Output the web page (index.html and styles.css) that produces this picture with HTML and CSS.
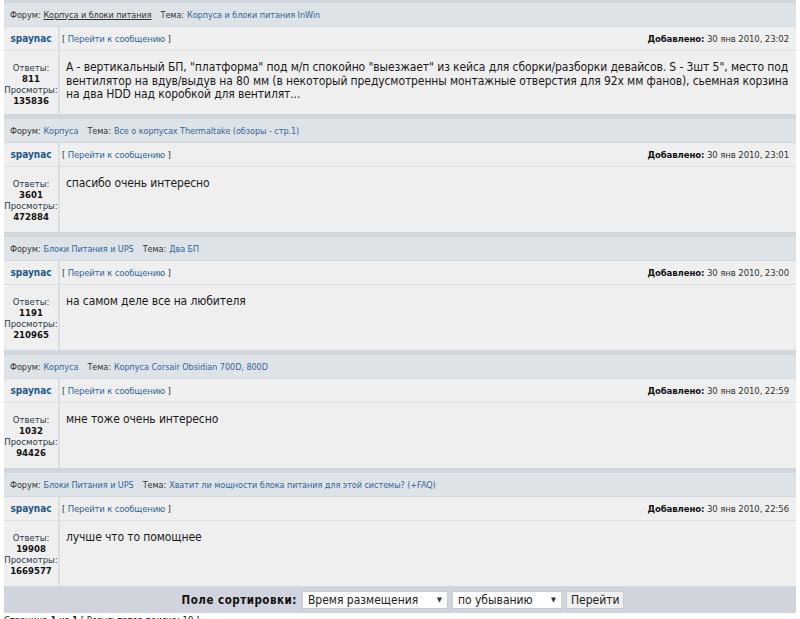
FILE: index.html
```
<!DOCTYPE html>
<html lang="ru">
<head>
<meta charset="utf-8">
<title>Результаты поиска</title>
<link rel="stylesheet" href="styles.css">
</head>
<body>
<div class="results">
  <div class="band band-top"></div>

  <div class="post post-first">
    <div class="post-head">Форум: <a class="visited" href="#">Корпуса и блоки питания</a><span class="sep"></span>Тема: <a href="#">Корпуса и блоки питания InWin</a></div>
    <div class="post-grid">
      <div class="author">spaynac</div>
      <div class="meta"><span class="goto">[ <a href="#">Перейти к сообщению</a> ]</span><span class="date"><b>Добавлено:</b> 30 янв 2010, 23:02</span></div>
      <div class="stats">Ответы:<br><b>811</b><br>Просмотры:<br><b>135836</b></div>
      <div class="body">А - вертикальный БП, "платформа" под м/п спокойно "выезжает" из кейса для сборки/разборки девайсов. S - 3шт 5", место под вентилятор на вдув/выдув на 80 мм (в некоторый предусмотренны монтажные отверстия для 92х мм фанов), сьемная корзина на два HDD над коробкой для вентилят...</div>
    </div>
  </div>
  <div class="band"></div>

  <div class="post">
    <div class="post-head">Форум: <a href="#">Корпуса</a><span class="sep"></span>Тема: <a href="#">Все о корпусах Thermaltake (обзоры - стр.1)</a></div>
    <div class="post-grid">
      <div class="author">spaynac</div>
      <div class="meta"><span class="goto">[ <a href="#">Перейти к сообщению</a> ]</span><span class="date"><b>Добавлено:</b> 30 янв 2010, 23:01</span></div>
      <div class="stats">Ответы:<br><b>3601</b><br>Просмотры:<br><b>472884</b></div>
      <div class="body">спасибо очень интересно</div>
    </div>
  </div>
  <div class="band"></div>

  <div class="post">
    <div class="post-head">Форум: <a href="#">Блоки Питания и UPS</a><span class="sep"></span>Тема: <a href="#">Два БП</a></div>
    <div class="post-grid">
      <div class="author">spaynac</div>
      <div class="meta"><span class="goto">[ <a href="#">Перейти к сообщению</a> ]</span><span class="date"><b>Добавлено:</b> 30 янв 2010, 23:00</span></div>
      <div class="stats">Ответы:<br><b>1191</b><br>Просмотры:<br><b>210965</b></div>
      <div class="body">на самом деле все на любителя</div>
    </div>
  </div>
  <div class="band"></div>

  <div class="post">
    <div class="post-head">Форум: <a href="#">Корпуса</a><span class="sep"></span>Тема: <a href="#">Корпуса Corsair Obsidian 700D, 800D</a></div>
    <div class="post-grid">
      <div class="author">spaynac</div>
      <div class="meta"><span class="goto">[ <a href="#">Перейти к сообщению</a> ]</span><span class="date"><b>Добавлено:</b> 30 янв 2010, 22:59</span></div>
      <div class="stats">Ответы:<br><b>1032</b><br>Просмотры:<br><b>94426</b></div>
      <div class="body">мне тоже очень интересно</div>
    </div>
  </div>
  <div class="band"></div>

  <div class="post">
    <div class="post-head">Форум: <a href="#">Блоки Питания и UPS</a><span class="sep"></span>Тема: <a href="#">Хватит ли мощности блока питания для этой системы? (+FAQ)</a></div>
    <div class="post-grid">
      <div class="author">spaynac</div>
      <div class="meta"><span class="goto">[ <a href="#">Перейти к сообщению</a> ]</span><span class="date"><b>Добавлено:</b> 30 янв 2010, 22:56</span></div>
      <div class="stats">Ответы:<br><b>19908</b><br>Просмотры:<br><b>1669577</b></div>
      <div class="body">лучше что то помощнее</div>
    </div>
  </div>

  <div class="sortbar">
    <span class="sort-label">Поле сортировки:</span>
    <span class="select sel-field">Время размещения<span class="arrow">▼</span></span>
    <span class="select sel-order">по убыванию<span class="arrow">▼</span></span>
    <span class="button">Перейти</span>
  </div>
</div>
<div class="pagination">Страница <b>1</b> из <b>1</b> [ Результатов поиска: 10 ]</div>
</body>
</html>
```

FILE: styles.css
```
html, body {
  margin: 0;
  padding: 0;
  background: #ffffff;
}

body {
  font-family: "DejaVu Sans Condensed", "DejaVu Sans", Verdana, sans-serif;
  color: #222222;
}

.results {
  margin: 0 4px;
  background: #d1d7dc;
}

.band {
  height: 5px;
  background: #d1d7dc;
}

.band-top {
  height: 3px;
}

.post-head {
  height: 24px;
  box-sizing: border-box;
  padding: 0 0 0 6px;
  display: flex;
  align-items: center;
  background: #dee3e7;
  font-size: 9px;
  letter-spacing: -0.05px;
  color: #333333;
  border-bottom: 1px solid #d3d9de;
}

.post-head a {
  color: #336699;
  text-decoration: none;
  margin-left: 3px;
}

.post-head a.visited {
  color: #333333;
  text-decoration: underline;
}

.sep {
  display: inline-block;
  width: 9px;
}

.post-grid {
  display: grid;
  grid-template-columns: 54px 1fr;
  grid-template-rows: 23px 65px;
  column-gap: 2px;
  row-gap: 1px;
  background: #dcdfe2;
}

.post-first .post-grid {
  grid-template-rows: 23px 63px;
}

.author,
.meta,
.stats,
.body {
  background: #efefef;
}

.author {
  display: flex;
  align-items: center;
  justify-content: center;
  font-size: 10px;
  font-weight: bold;
  color: #1d5a87;
}

.meta {
  display: flex;
  align-items: center;
  justify-content: space-between;
  padding: 0 7px 0 2px;
  font-size: 9.5px;
  letter-spacing: -0.1px;
  color: #333333;
}

.goto {
  letter-spacing: -0.2px;
}

.meta a {
  color: #336699;
  text-decoration: none;
}

.date b {
  color: #111111;
}

.stats {
  padding-top: 11px;
  text-align: center;
  font-size: 9.5px;
  line-height: 11px;
  color: #2b3a4a;
  white-space: nowrap;
}

.stats b {
  color: #111111;
}

.body {
  padding: 10px 4px 0 6px;
  font-size: 12px;
  line-height: 13.5px;
  letter-spacing: -0.1px;
  color: #1a1a1a;
}

.sortbar {
  margin-top: 1px;
  height: 26px;
  box-sizing: border-box;
  padding-left: 6px;
  display: flex;
  align-items: center;
  justify-content: center;
  gap: 4px;
  background: #d1d4dc;
}

.sort-label {
  font-size: 11.5px;
  font-weight: bold;
  letter-spacing: 0.5px;
  color: #111111;
  margin-right: 1px;
}

.select {
  height: 18px;
  box-sizing: border-box;
  display: flex;
  align-items: center;
  justify-content: space-between;
  padding: 0 5px 0 5px;
  background: #ffffff;
  border: 1px solid #c8ccd0;
  font-size: 12px;
  color: #222222;
}

.sel-field {
  width: 146px;
}

.sel-order {
  width: 110px;
}

.arrow {
  font-size: 7px;
  color: #333333;
}

.button {
  height: 18px;
  box-sizing: border-box;
  display: flex;
  align-items: center;
  padding: 0 4px;
  background: #efefef;
  border: 1px solid #c8ccd0;
  font-size: 12px;
  color: #222222;
}

.pagination {
  padding: 1px 0 0 4px;
  font-size: 9.5px;
  color: #222222;
}
```
